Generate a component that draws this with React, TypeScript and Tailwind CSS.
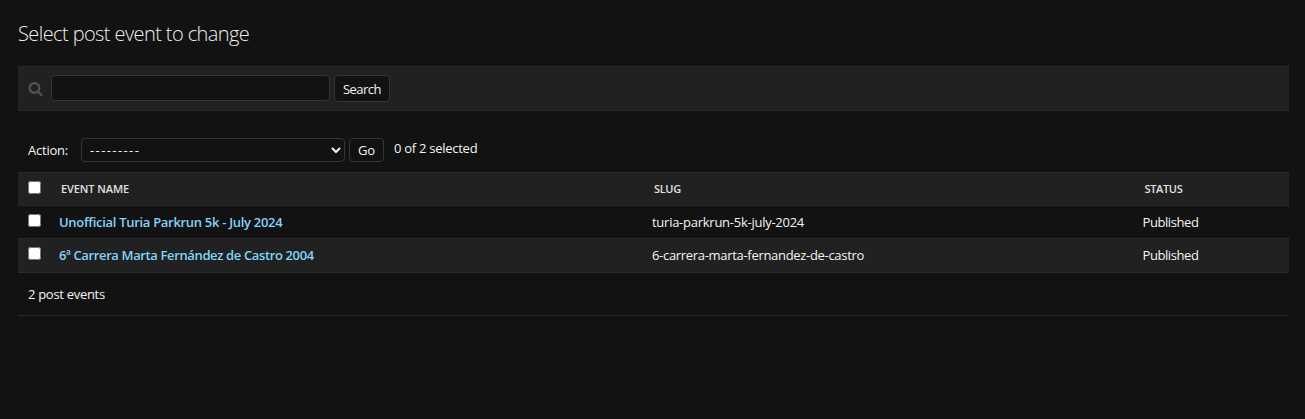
import React from "react";

const rows = [
  {
    name: "Unofficial Turia Parkrun 5k - July 2024",
    slug: "turia-parkrun-5k-july-2024",
    status: "Published",
    rowClass: "h-[32px] bg-[#121212]",
    nameClass: "tracking-[-0.3px]",
    slugClass: "tracking-[-0.26px]",
  },
  {
    name: "6ª Carrera Marta Fernández de Castro 2004",
    slug: "6-carrera-marta-fernandez-de-castro",
    status: "Published",
    rowClass: "h-[35px] border-y border-[#2a2a2a] bg-[#212121]",
    nameClass: "tracking-[-0.37px]",
    slugClass: "tracking-[-0.31px]",
  },
];

const columns = "grid grid-cols-[41px_593px_490.5px_1fr]";

function Check({ label }: { label: string }) {
  return <input type="checkbox" aria-label={label} className="m-0 ml-[10px] block h-[13px] w-[13px]" />;
}

export default function App() {
  return (
    <main className="h-[419px] overflow-hidden bg-[#121212] pl-[18px] pr-[16px] font-['Open_Sans','Noto_Sans',sans-serif] text-[13px] leading-[18px] text-[#f4f4f4]">
      <h1 className="h-[66px] pt-[22px] text-[20px] font-light leading-[24px] tracking-[-0.59px] whitespace-nowrap text-[#eeeeee]">
        <span>Select post event to change</span>
      </h1>

      <form className="flex h-[45px] items-start border-y border-[#2a2a2a] bg-[#212121] pl-[10px] pt-[8px]" onSubmit={(e) => e.preventDefault()}>
        <svg className="mt-[6px] h-[15px] w-[15px]" viewBox="0 0 1792 1792" fill="#555555">
          <path d="M1216 832q0-185-131.500-316.500t-316.500-131.500-316.500 131.500-131.500 316.500 131.500 316.500 316.500 131.500 316.500-131.500 131.500-316.500zm512 832q0 52-38 90t-90 38q-54 0-90-38l-343-342q-179 124-399 124-143 0-273.500-55.500t-225-150-150-225-55.500-273.500 55.500-273.500 150-225 225-150 273.500-55.500 273.500 55.500 225 150 150 225 55.500 273.500q0 220-124 399l343 343q37 37 37 90z" />
        </svg>
        <input aria-label="Search" className="ml-[8px] h-[25.5px] w-[279px] rounded-[4px] border border-[#353535] bg-[#121212] px-[6px] outline-none" />
        <button className="ml-[4px] h-[27px] w-[56px] rounded-[4px] border border-[#353535] bg-[#121212] pt-px tracking-[-0.5px]">Search</button>
      </form>

      <div className="flex h-[61px] items-start pl-[10px] pt-[27px]">
        <label htmlFor="action" className="mt-[3px] w-[53px] tracking-[-0.22px]"><span>Action:</span></label>
        <select id="action" className="h-[24px] w-[264px] rounded-[4px] border border-[#353535] bg-[#121212] pl-[4px] text-[13px] leading-[18px] tracking-[1.4px]">
          <option>---------</option>
        </select>
        <button className="ml-[4px] h-[24px] w-[35px] rounded-[4px] border border-[#353535] bg-[#121212] tracking-[-0.2px]">Go</button>
        <span className="ml-[10px] mt-[1px] tracking-[-0.27px]">0 of 2 selected</span>
      </div>

      <section>
        <div className={`${columns} h-[34px] border-y border-[#2a2a2a] bg-[#212121] text-[11px] font-semibold leading-[16px] text-[#e0e0e0]`}>
          <div className="pt-[8px]"><Check label="Select all" /></div>
          <div className="pl-[2px] pt-[8px] tracking-[-0.1px]"><span>EVENT NAME</span></div>
          <div className="pl-[2px] pt-[8px] tracking-[-0.35px]"><span>SLUG</span></div>
          <div className="pl-[2px] pt-[8px] tracking-[-0.35px]"><span>STATUS</span></div>
        </div>
        {rows.map((row) => (
          <div key={row.slug} className={`${columns} ${row.rowClass}`}>
            <div className="pt-[8px]"><Check label={row.name} /></div>
            <div className="pt-[7px]"><a className={`font-semibold text-[#81d4fa] ${row.nameClass}`}>{row.name}</a></div>
            <div className="pt-[7px]"><span className={row.slugClass}>{row.slug}</span></div>
            <div className="pt-[7px] tracking-[-0.42px]"><span>{row.status}</span></div>
          </div>
        ))}
      </section>

      <p className="h-[43px] border-b border-[#2a2a2a] pl-[10px] pt-[12px] tracking-[-0.3px]"><span>2 post events</span></p>
    </main>
  );
}
